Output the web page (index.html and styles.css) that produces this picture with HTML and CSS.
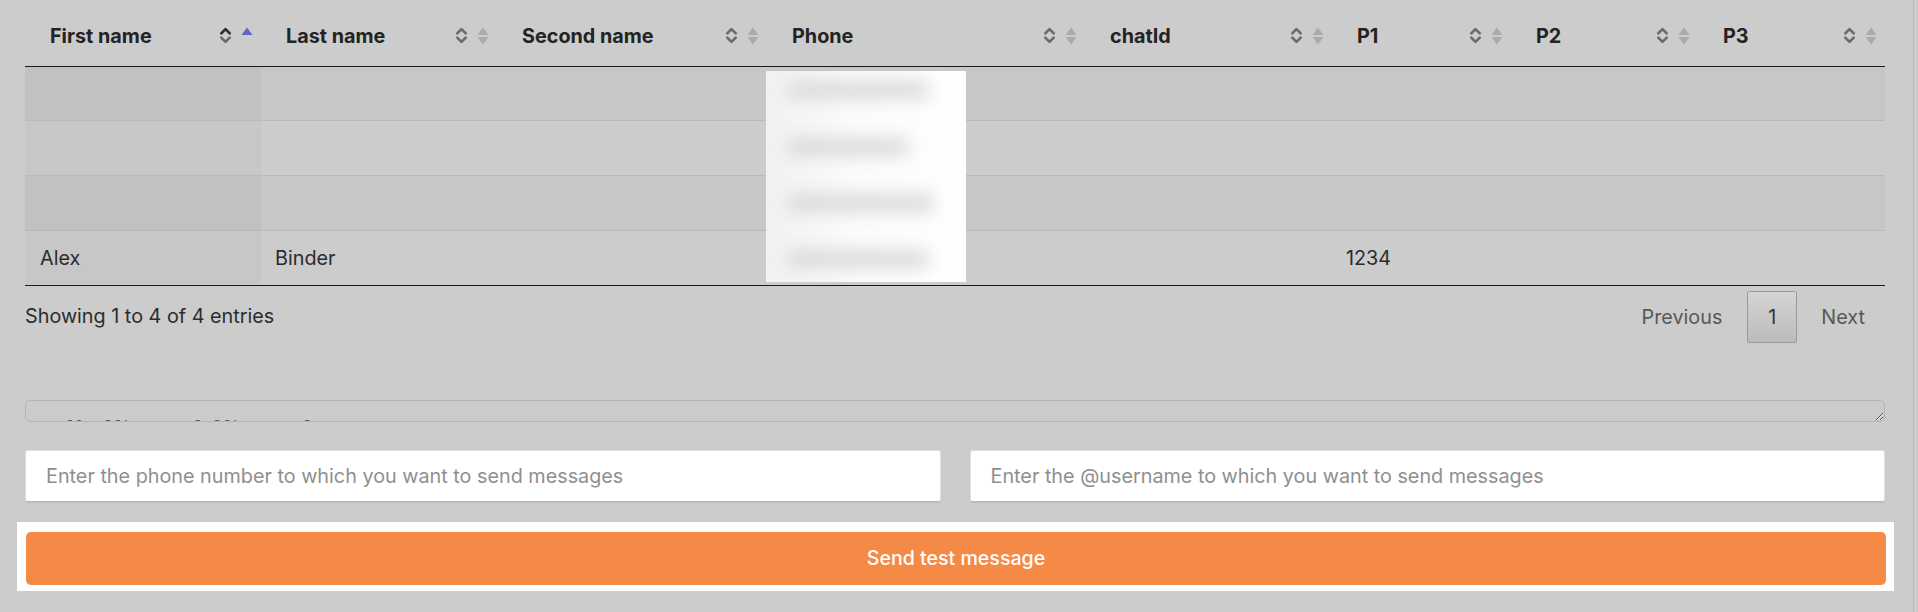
FILE: index.html
```html
<!DOCTYPE html>
<html lang="en">
<head>
<meta charset="utf-8">
<title>Contacts</title>
<link rel="stylesheet" href="styles.css">
</head>
<body>
<div class="panel">
  <div class="table-wrap">
    <table class="dt">
      <colgroup>
        <col style="width:236px"><col style="width:236px"><col style="width:270px"><col style="width:318px"><col style="width:247px"><col style="width:179px"><col style="width:187px"><col style="width:187px">
      </colgroup>
      <thead>
        <tr>
          <th class="sorted"><div class="th-in"><span class="lbl">First name</span><svg class="chev" viewBox="0 0 12 18"><path class="cu" d="M2 7 L6 3 L10 7"/><path class="cd" d="M2 11 L6 15 L10 11"/></svg><svg class="tri" viewBox="0 0 12 20"><path class="up on" d="M0.5 9 L6 1.5 L11.5 9 Z"/></svg></div></th>
          <th><div class="th-in"><span class="lbl">Last name</span><svg class="chev" viewBox="0 0 12 18"><path d="M2 7 L6 3 L10 7"/><path d="M2 11 L6 15 L10 11"/></svg><svg class="tri" viewBox="0 0 12 20"><path class="up" d="M0.5 9 L6 1.5 L11.5 9 Z"/><path class="dn" d="M0.5 11 L6 18.5 L11.5 11 Z"/></svg></div></th>
          <th><div class="th-in"><span class="lbl">Second name</span><svg class="chev" viewBox="0 0 12 18"><path d="M2 7 L6 3 L10 7"/><path d="M2 11 L6 15 L10 11"/></svg><svg class="tri" viewBox="0 0 12 20"><path class="up" d="M0.5 9 L6 1.5 L11.5 9 Z"/><path class="dn" d="M0.5 11 L6 18.5 L11.5 11 Z"/></svg></div></th>
          <th><div class="th-in"><span class="lbl">Phone</span><svg class="chev" viewBox="0 0 12 18"><path d="M2 7 L6 3 L10 7"/><path d="M2 11 L6 15 L10 11"/></svg><svg class="tri" viewBox="0 0 12 20"><path class="up" d="M0.5 9 L6 1.5 L11.5 9 Z"/><path class="dn" d="M0.5 11 L6 18.5 L11.5 11 Z"/></svg></div></th>
          <th><div class="th-in"><span class="lbl">chatId</span><svg class="chev" viewBox="0 0 12 18"><path d="M2 7 L6 3 L10 7"/><path d="M2 11 L6 15 L10 11"/></svg><svg class="tri" viewBox="0 0 12 20"><path class="up" d="M0.5 9 L6 1.5 L11.5 9 Z"/><path class="dn" d="M0.5 11 L6 18.5 L11.5 11 Z"/></svg></div></th>
          <th><div class="th-in"><span class="lbl">P1</span><svg class="chev" viewBox="0 0 12 18"><path d="M2 7 L6 3 L10 7"/><path d="M2 11 L6 15 L10 11"/></svg><svg class="tri" viewBox="0 0 12 20"><path class="up" d="M0.5 9 L6 1.5 L11.5 9 Z"/><path class="dn" d="M0.5 11 L6 18.5 L11.5 11 Z"/></svg></div></th>
          <th><div class="th-in"><span class="lbl">P2</span><svg class="chev" viewBox="0 0 12 18"><path d="M2 7 L6 3 L10 7"/><path d="M2 11 L6 15 L10 11"/></svg><svg class="tri" viewBox="0 0 12 20"><path class="up" d="M0.5 9 L6 1.5 L11.5 9 Z"/><path class="dn" d="M0.5 11 L6 18.5 L11.5 11 Z"/></svg></div></th>
          <th><div class="th-in"><span class="lbl">P3</span><svg class="chev" viewBox="0 0 12 18"><path d="M2 7 L6 3 L10 7"/><path d="M2 11 L6 15 L10 11"/></svg><svg class="tri" viewBox="0 0 12 20"><path class="up" d="M0.5 9 L6 1.5 L11.5 9 Z"/><path class="dn" d="M0.5 11 L6 18.5 L11.5 11 Z"/></svg></div></th>
        </tr>
      </thead>
      <tbody>
        <tr class="odd"><td class="s"></td><td></td><td></td><td></td><td></td><td></td><td></td><td></td></tr>
        <tr class="even"><td class="s"></td><td></td><td></td><td></td><td></td><td></td><td></td><td></td></tr>
        <tr class="odd"><td class="s"></td><td></td><td></td><td></td><td></td><td></td><td></td><td></td></tr>
        <tr class="even"><td class="s">Alex</td><td>Binder</td><td></td><td></td><td></td><td>1234</td><td></td><td></td></tr>
      </tbody>
    </table>
    <div class="redact" aria-hidden="true">
      <span class="smudge s1"></span>
      <span class="smudge s2"></span>
      <span class="smudge s3"></span>
      <span class="smudge s4"></span>
    </div>
  </div>
  <div class="dt-footer">
    <div class="info">Showing 1 to 4 of 4 entries</div>
    <div class="paging">
      <span class="pg-btn prev">Previous</span>
      <span class="pg-btn current">1</span>
      <span class="pg-btn next">Next</span>
    </div>
  </div>
  <textarea class="msg">Hello [firstName] [firstName]!</textarea>
  <div class="inputs">
    <input type="text" placeholder="Enter the phone number to which you want to send messages">
    <input type="text" placeholder="Enter the @username to which you want to send messages">
  </div>
  <div class="send-wrap">
    <button class="send" type="button">Send test message</button>
  </div>
</div>
</body>
</html>
```

FILE: styles.css
```css
* { box-sizing: border-box; }
html, body { margin: 0; padding: 0; }
body {
  background: #cccccc;
  font-family: Inter, "Noto Sans", sans-serif;
  color: #2a2a2a;
  height: 612px;
  overflow: hidden;
}
.panel {
  margin-left: 8px;
  width: 1906px;
  border-right: 1px solid #bcbcbc;
  padding: 0 27px 0 17px;
  height: 612px;
}
.table-wrap { position: relative; }
.dt {
  border-collapse: collapse;
  table-layout: fixed;
  width: 1860px;
  font-size: 19.8px;
}
.dt th {
  height: 66px;
  padding: 0 8px 0 25px;
  border-bottom: 1px solid #1a1a1a;
  text-align: left;
  font-weight: 700;
  color: #232323;
}
.th-in { display: flex; align-items: center; padding-top: 6px; }
.lbl { flex: 1; white-space: nowrap; }
.chev { width: 13px; height: 19px; fill: none; stroke: #6a6a6a; stroke-width: 2.5; stroke-linecap: round; stroke-linejoin: round; }
.sorted .chev .cu { stroke: #2b2b2b; }
.sorted .chev .cd { stroke: #6a6a6a; }
.tri { width: 12px; height: 20px; margin-left: 9px; }
.tri path { fill: #ababab; }
.tri path.on { fill: #6464c8; }
.dt td {
  height: 55px;
  padding: 0 14px;
  border-top: 1px solid #bababa;
  color: #2b2b2b;
}
.dt tbody tr:first-child td { border-top: none; height: 54px; }
.dt tbody tr:last-child td { border-bottom: 1px solid #1a1a1a; }
.dt td:first-child { padding-left: 15px; }
.odd td { background: #c7c7c7; }
.odd td.s { background: #c1c1c1; }
.even td { background: #cccccc; }
.even td.s { background: #c7c7c7; }
.redact {
  position: absolute;
  left: 741px;
  top: 71px;
  width: 200px;
  height: 211px;
  background: linear-gradient(to right, #f1f1f1 0%, #fbfbfb 40%, #ffffff 100%);
  overflow: hidden;
}
.smudge {
  position: absolute;
  left: 22px;
  width: 140px;
  height: 16px;
  background: #d6d6d6;
  filter: blur(9px);
}
.s1 { top: 11px; }
.s2 { top: 68px; width: 120px; }
.s3 { top: 124px; width: 145px; }
.s4 { top: 180px; }
.dt-footer {
  display: flex;
  justify-content: space-between;
  align-items: flex-start;
  margin-top: 5px;
  width: 1860px;
}
.info { font-size: 19.8px; line-height: 24px; padding-top: 13px; color: #2c2c2c; }
.paging { display: flex; align-items: center; }
.pg-btn {
  display: flex;
  align-items: center;
  justify-content: center;
  height: 52px;
  font-size: 19.8px;
  color: #585858;
  border: 1px solid transparent;
  border-radius: 2px;
}
.pg-btn.prev { padding: 0 24px 0 20px; }
.pg-btn.next { padding: 0 19px 0 23px; }
.pg-btn.current {
  width: 50px;
  padding: 0;
  color: #333;
  border-color: #9a9a9a;
  background: linear-gradient(to bottom, #d4d4d4 0%, #bcbcbc 100%);
}
.msg {
  display: block;
  margin-top: 57px;
  width: 1860px;
  height: 22px;
  padding: 16px 0 0 22px;
  background: #cbcbcb;
  border: 1px solid #b4b4b4;
  border-radius: 5px;
  font-family: "Liberation Mono", "DejaVu Sans Mono", monospace;
  font-size: 15.2px;
  line-height: 20px;
  color: #5a5a5a;
  overflow: hidden;
  resize: vertical;
}
.inputs {
  display: flex;
  gap: 29px;
  margin-top: 28px;
  width: 1860px;
}
.inputs input {
  flex: 1;
  height: 52px;
  padding: 0 20px;
  background: #ffffff;
  border: 1px solid #e2e2e2;
  border-bottom-color: #b9b9b9;
  border-radius: 3px;
  box-shadow: 0 1px 1px rgba(0,0,0,0.08);
  font-family: Inter, "Noto Sans", sans-serif;
  font-size: 19.8px;
  color: #333;
  outline: none;
}
.inputs input::placeholder { color: #8f8f8f; }
.send-wrap {
  margin-top: 20px;
  margin-left: -8px;
  width: 1877px;
  background: #ffffff;
  padding: 10px 8px 6px 9px;
}
.send {
  display: block;
  width: 100%;
  height: 53px;
  border: none;
  border-radius: 5px;
  background: #f58946;
  color: #ffffff;
  font-family: Inter, "Noto Sans", sans-serif;
  font-size: 19.6px;
  font-weight: 500;
  cursor: pointer;
}
```
